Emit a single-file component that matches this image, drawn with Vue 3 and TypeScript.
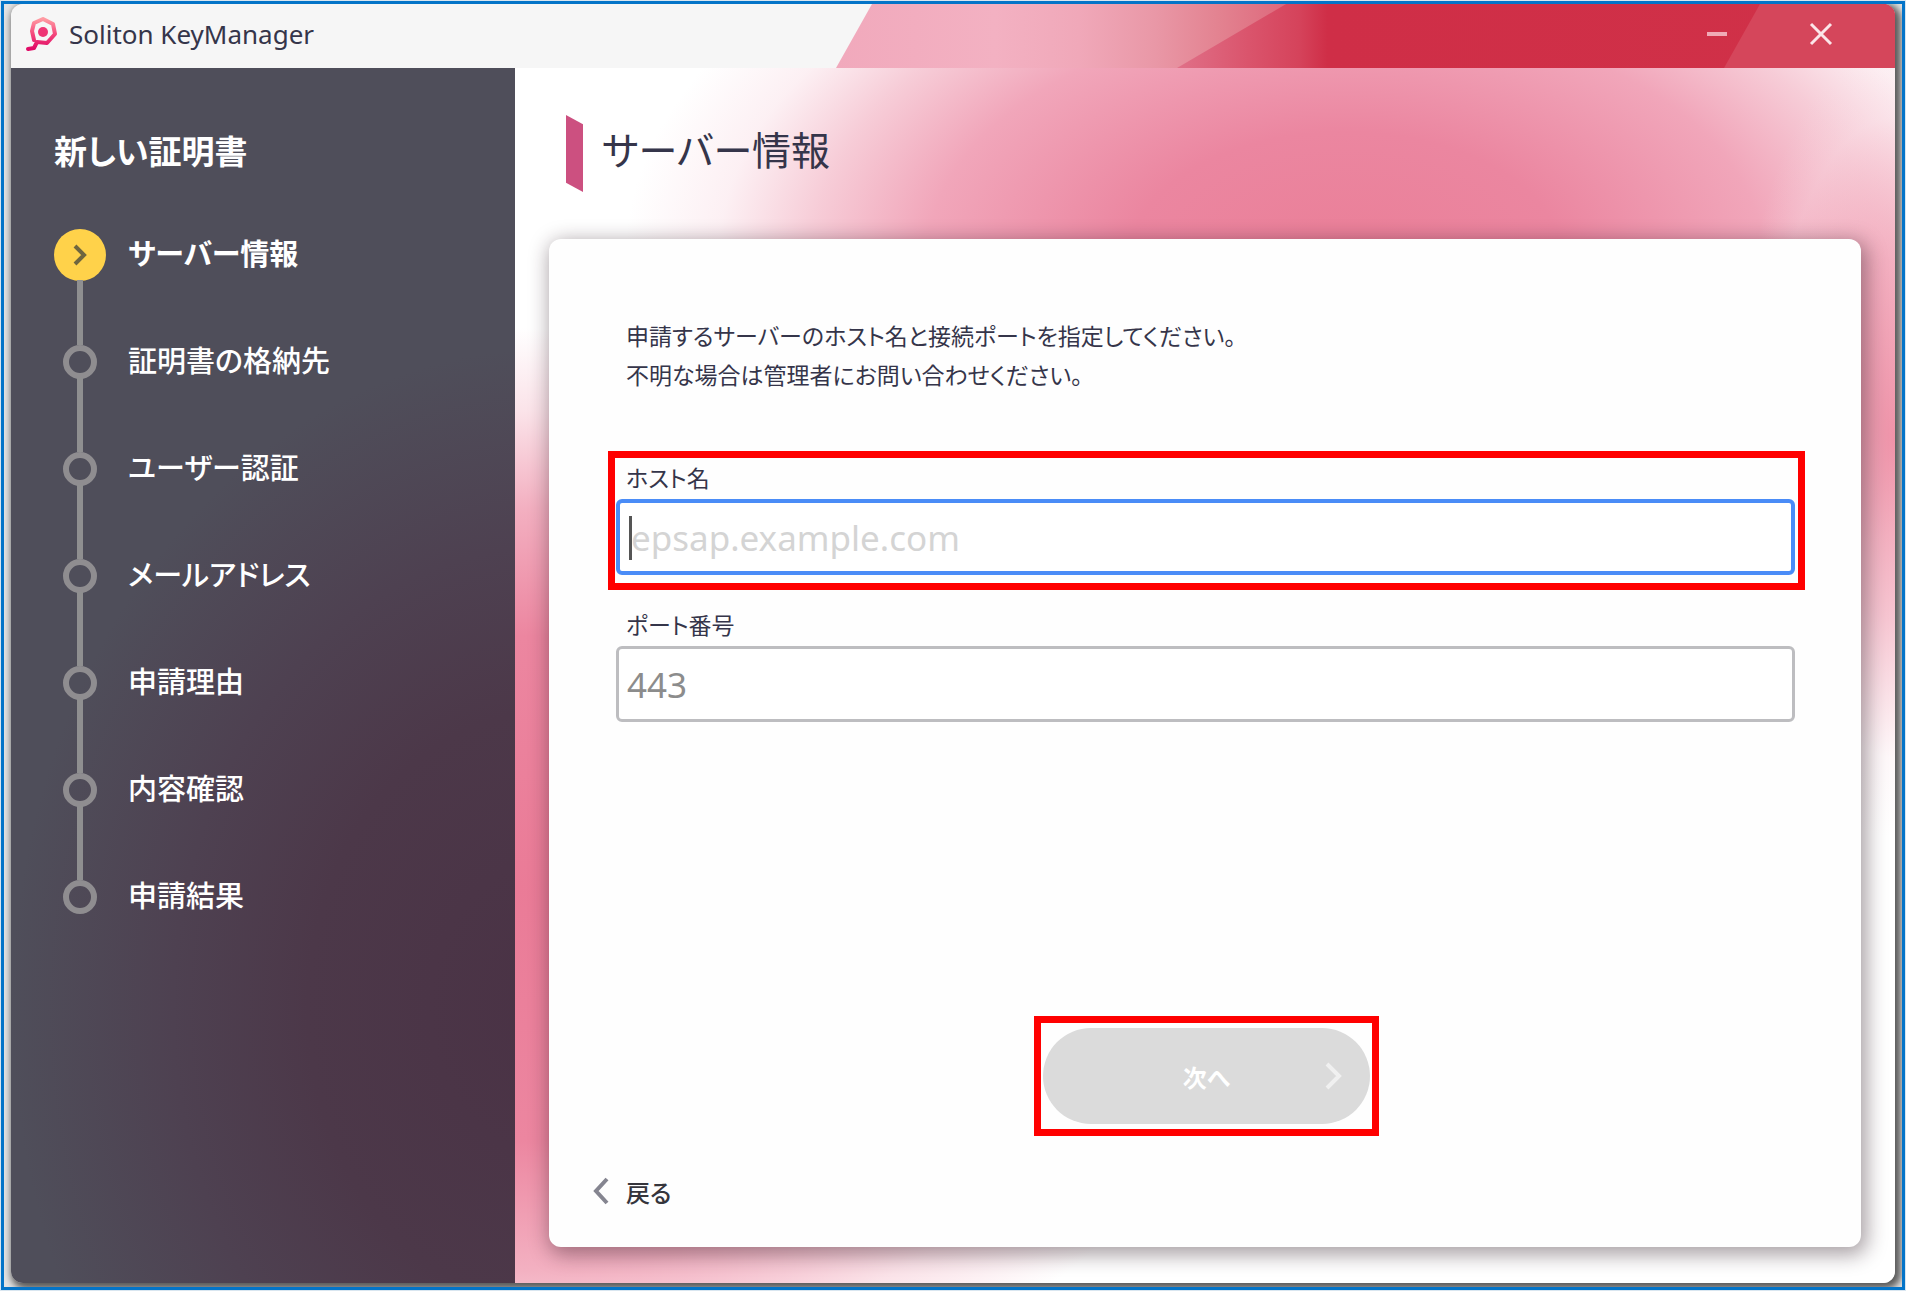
<script setup lang="ts">
import { ref } from 'vue'

interface Step {
  label: string
  active?: boolean
}

const steps: Step[] = [
  { label: 'サーバー情報', active: true },
  { label: '証明書の格納先' },
  { label: 'ユーザー認証' },
  { label: 'メールアドレス' },
  { label: '申請理由' },
  { label: '内容確認' },
  { label: '申請結果' },
]

const host = ref('')
const port = ref('443')
</script>

<template>
  <div class="frame">
    <div class="window">
      <header class="titlebar">
        <svg class="ribbon pale" viewBox="0 0 100 64" preserveAspectRatio="none" aria-hidden="true">
          <defs>
            <linearGradient id="pale" x1="0" x2="1" y1="0" y2="0">
              <stop offset="0" stop-color="#f1a9bc" />
              <stop offset="0.15" stop-color="#f3b1c2" />
              <stop offset="0.23" stop-color="#f0a8b9" />
              <stop offset="0.3" stop-color="#e998a7" />
              <stop offset="0.36" stop-color="#e38391" />
              <stop offset="0.44" stop-color="#dc6276" />
              <stop offset="0.46" stop-color="#d03048" />
              <stop offset="1" stop-color="#d03048" />
            </linearGradient>
            <linearGradient id="deep" x1="0" x2="1" y1="0" y2="0">
              <stop offset="0" stop-color="#e07088" />
              <stop offset="0.1" stop-color="#da546c" />
              <stop offset="0.17" stop-color="#d5435b" />
              <stop offset="0.21" stop-color="#cf2e47" />
              <stop offset="1" stop-color="#d03148" />
            </linearGradient>
          </defs>
          <polygon points="3.4,0 100,0 100,64 0,64" fill="url(#pale)" />
        </svg>
        <svg class="ribbon deep" viewBox="0 0 100 64" preserveAspectRatio="none" aria-hidden="true">
          <polygon points="15.2,0 100,0 100,64 0,64" fill="url(#deep)" />
        </svg>
        <svg class="ribbon corner" viewBox="0 0 100 64" preserveAspectRatio="none" aria-hidden="true">
          <polygon points="21,0 100,0 100,64 0,64" fill="#d5465b" />
        </svg>
        <svg class="logo" viewBox="0 0 34 36" aria-hidden="true">
          <defs>
            <linearGradient id="key" x1="0" x2="0" y1="0" y2="1">
              <stop offset="0" stop-color="#ff9aa2" />
              <stop offset="0.5" stop-color="#f4487c" />
              <stop offset="1" stop-color="#e00a66" />
            </linearGradient>
          </defs>
          <path
            d="M9 24 L7 15 L9 7 L18 3 L28 8 L30 18 L22 27 L12 26 L9 32 L3 33"
            fill="none"
            stroke="url(#key)"
            stroke-width="4"
            stroke-linejoin="round"
            stroke-linecap="round"
          />
          <circle cx="18" cy="16" r="5" fill="#ee3474" />
        </svg>
        <span class="app-name">Soliton KeyManager</span>
        <div class="controls">
          <button type="button" aria-label="最小化">
            <svg width="24" height="24" viewBox="0 0 24 24">
              <path d="M2 12 H22" stroke="#f0aab6" stroke-width="4" />
            </svg>
          </button>
          <button type="button" aria-label="閉じる">
            <svg width="24" height="24" viewBox="0 0 24 24">
              <path d="M2 2 L22 22 M22 2 L2 22" stroke="#fbe6e9" stroke-width="3" />
            </svg>
          </button>
        </div>
      </header>

      <div class="body">
        <nav class="sidebar">
          <h2>新しい証明書</h2>
          <ol class="steps">
            <li v-for="step in steps" :key="step.label" :class="{ active: step.active }">
              <span class="marker">
                <svg v-if="step.active" width="16" height="24" viewBox="0 0 16 24" aria-hidden="true">
                  <path d="M3 3 L12 12 L3 21" fill="none" stroke="#6f663f" stroke-width="4" />
                </svg>
              </span>
              <span class="step-label">{{ step.label }}</span>
            </li>
          </ol>
        </nav>

        <main class="content">
          <div class="heading">
            <span class="accent"></span>
            <h1>サーバー情報</h1>
          </div>

          <form class="card" @submit.prevent>
            <p>申請するサーバーのホスト名と接続ポートを指定してください。<br />不明な場合は管理者にお問い合わせください。</p>

            <div class="field highlight">
              <label for="host">ホスト名</label>
              <div class="input-wrap">
                <input id="host" v-model="host" class="focused" type="text" placeholder="epsap.example.com" />
                <span class="caret"></span>
              </div>
            </div>
            <div class="field">
              <label for="port">ポート番号</label>
              <div class="input-wrap">
                <input id="port" v-model="port" type="text" />
              </div>
            </div>

            <div class="next-box">
              <button class="next" type="submit" disabled>
                次へ
                <svg width="18" height="28" viewBox="0 0 18 28" aria-hidden="true">
                  <path d="M3 2 L15 14 L3 26" fill="none" stroke="#f0f0f0" stroke-width="4" />
                </svg>
              </button>
            </div>

            <button class="back" type="button">
              <svg width="18" height="28" viewBox="0 0 18 28" aria-hidden="true">
                <path d="M15 2 L4 14 L15 26" fill="none" stroke="#858590" stroke-width="4" />
              </svg>
              戻る
            </button>
          </form>
        </main>
      </div>
    </div>
  </div>
</template>

<style>
body {
  margin: 0;
  background: #d9e6f0;
}
</style>

<style scoped>
.frame {
  box-sizing: border-box;
  display: flex;
  min-height: calc(100vh - 2px);
  margin: 1px;
  padding: 0 7px 4px;
  border: 3px solid #0474c8;
  background: #e4e4e4;
  font-family: 'Noto Sans', 'Noto Sans CJK JP', sans-serif;
  font-feature-settings: 'palt';
  color: #35354a;
  overflow: hidden;
}

.window {
  flex: 1;
  display: flex;
  flex-direction: column;
  border-radius: 12px;
  overflow: hidden;
  box-shadow: 3px 3px 7px 3px rgba(0, 0, 0, 0.6);
}

.titlebar {
  box-sizing: border-box;
  position: relative;
  display: flex;
  align-items: center;
  height: 64px;
  padding: 0 0 4px 14px;
  background: #f6f6f6;
}

.ribbon {
  position: absolute;
  top: 0;
  right: 0;
  height: 100%;
}

.ribbon.pale {
  width: 56.2%;
}

.ribbon.deep {
  width: 38.1%;
}

.ribbon.corner {
  width: 9.1%;
}

.logo {
  width: 34px;
  height: 36px;
}

.app-name {
  margin-left: 10px;
  font-size: 26px;
}

.controls {
  position: relative;
  display: flex;
  gap: 32px;
  margin-left: auto;
  padding-right: 38px;
}

.controls button {
  display: grid;
  place-items: center;
  width: 72px;
  height: 60px;
  padding: 0;
  border: 0;
  background: none;
}

.body {
  flex: 1;
  display: flex;
}

.sidebar {
  box-sizing: border-box;
  width: 504px;
  padding: 60px 43px;
  background:
    radial-gradient(ellipse 540px 660px at 540px 940px, #4a3245 0%, #4c3849 45%, #4e4151 70%, rgba(79, 78, 90, 0) 100%),
    #4f4e5a;
  color: #fff;
}

.sidebar h2 {
  margin: 0;
  font-size: 33px;
  line-height: 48px;
  font-weight: 700;
}

.steps {
  margin: 25px 0 0;
  padding: 0;
  list-style: none;
}

.steps li {
  position: relative;
  display: flex;
  align-items: center;
  gap: 22px;
  height: 107px;
  font-size: 29px;
  font-weight: 500;
}

.steps li.active {
  font-weight: 700;
}

.steps li:not(:last-child)::after {
  content: '';
  position: absolute;
  left: 23px;
  top: 70px;
  width: 6px;
  height: 74px;
  background: #8f8f90;
}

.steps li.active::after {
  top: 79px;
  height: 65px;
}

.step-label {
  padding-bottom: 5px;
}

.marker {
  box-sizing: border-box;
  display: grid;
  place-items: center;
  width: 34px;
  height: 34px;
  margin: 0 9px;
  border: 6px solid #8f8d90;
  border-radius: 50%;
}

.active .marker {
  width: 52px;
  height: 52px;
  margin: 0;
  border: 0;
  background: #ffd24a;
}

.content {
  flex: 1;
  display: flex;
  flex-direction: column;
  padding: 47px 34px 36px;
  background:
    radial-gradient(ellipse 760px 560px at 0 820px, #ea7b97 0%, #ec86a0 45%, #f3b0c1 68%, rgba(248, 208, 218, 0.6) 85%, rgba(255, 255, 255, 0) 100%),
    radial-gradient(ellipse 160px 400px at 100% 370px, rgba(236, 130, 155, 0.85) 0%, rgba(240, 150, 172, 0.55) 45%, rgba(250, 220, 228, 0.2) 80%, rgba(255, 255, 255, 0) 100%),
    radial-gradient(ellipse 720px 420px at 830px 190px, #ea7f98 0%, #eb86a0 30%, #f1a6ba 58%, rgba(245, 195, 208, 0.85) 74%, rgba(250, 225, 232, 0.5) 87%, rgba(255, 255, 255, 0) 100%),
    #fff;
}

.heading {
  display: flex;
  align-items: center;
  gap: 19px;
  height: 77px;
  margin-left: 17px;
}

.accent {
  width: 17px;
  height: 77px;
  background: #cc5080;
  clip-path: polygon(0 0, 100% 12%, 100% 100%, 0 88%);
}

.heading h1 {
  margin: 0 0 8px;
  font-size: 39px;
  line-height: 64px;
  font-weight: 400;
}

.card {
  flex: 1;
  display: flex;
  flex-direction: column;
  margin-top: 47px;
  padding: 78px 56px 40px 59px;
  border-radius: 12px;
  background: #fefefe;
  box-shadow: 3px 5px 20px 3px rgba(40, 20, 30, 0.4);
}

.card p {
  margin: 0 0 56px 18px;
  font-size: 23px;
  line-height: 39px;
}

.field {
  margin-bottom: 8px;
  padding: 0 3px 8px 1px;
  border: 7px solid transparent;
}

.field.highlight {
  border-color: #f00;
}

.field label {
  display: block;
  margin-left: 10px;
  font-size: 23px;
  line-height: 41px;
}

.input-wrap {
  position: relative;
}

input {
  box-sizing: border-box;
  display: block;
  width: 100%;
  height: 76px;
  padding: 0 8px;
  border: 3px solid #bdbdc0;
  border-radius: 6px;
  background: #fff;
  color: #8c8c8c;
  font-family: inherit;
  font-size: 35px;
  outline: none;
}

input.focused {
  padding: 0 11px;
  border: 4px solid #4a8cf7;
}

input::placeholder {
  color: #d4d4d4;
}

.caret {
  position: absolute;
  left: 13px;
  top: 17px;
  width: 3px;
  height: 44px;
  background: #555;
}

.next-box {
  align-self: center;
  margin-top: auto;
  padding: 5px 2px;
  border: 7px solid #f00;
}

.next {
  position: relative;
  display: block;
  width: 327px;
  height: 96px;
  border: 0;
  border-radius: 48px;
  background: #dbdbdb;
  color: #fff;
  font: inherit;
  font-size: 24px;
  font-weight: 700;
}

.next svg {
  position: absolute;
  right: 28px;
  top: 34px;
}

.back {
  display: flex;
  align-items: center;
  align-self: flex-start;
  gap: 16px;
  height: 32px;
  margin: 39px 0 0 -16px;
  padding: 0;
  border: 0;
  background: none;
  color: #35353c;
  font: inherit;
  font-size: 24px;
  font-weight: 500;
}
</style>
